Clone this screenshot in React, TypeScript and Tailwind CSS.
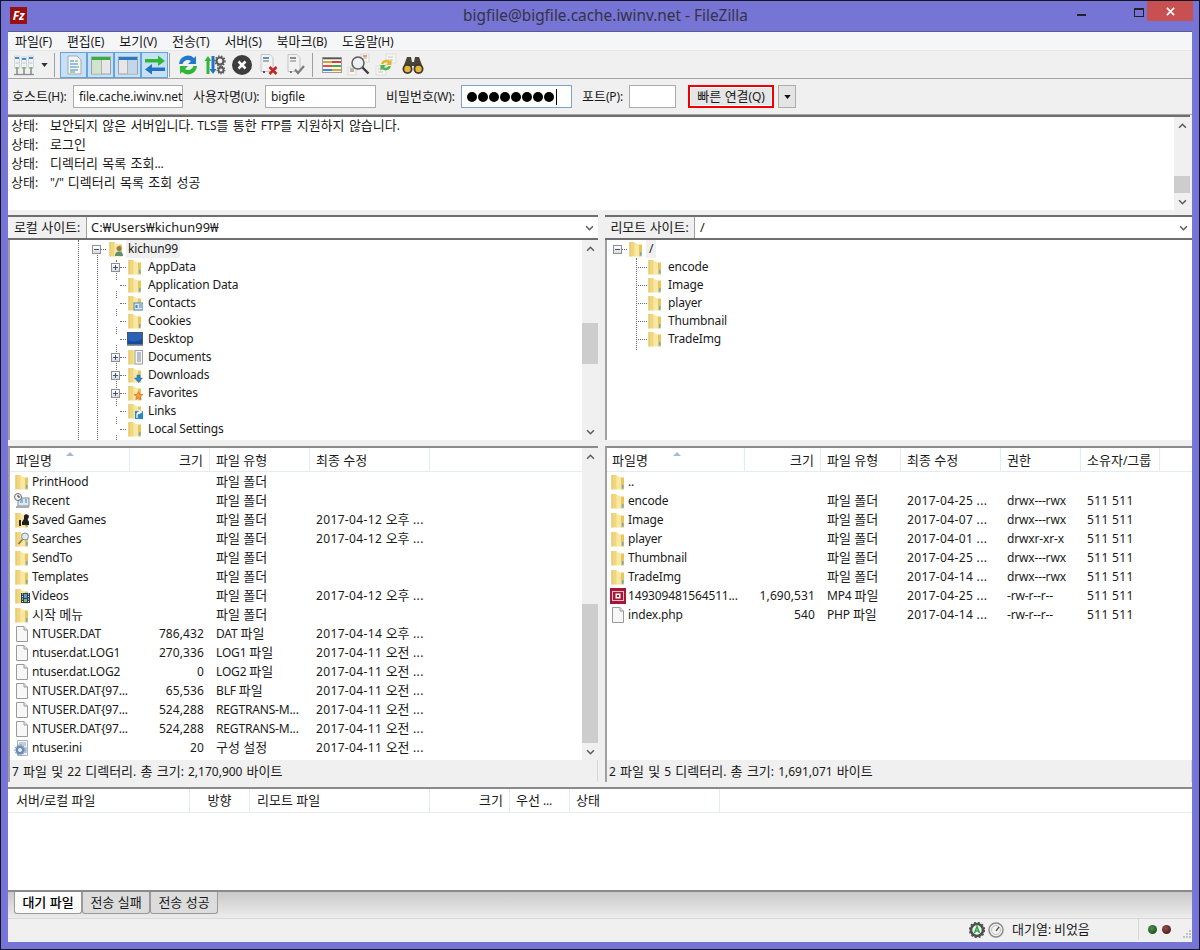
import type { ReactNode } from "react";

type FileRow = {
  name: string;
  size?: string;
  type: string;
  date?: string;
  perm?: string;
  owner?: string;
  icon: ReactNode;
};

// hangul runs are set a bit larger than latin, like the Windows UI font
const K = ({ children }: { children: string }) => (
  <span>
    {children.split(/([가-힣]+(?:\s[가-힣]+)*)/).map((part, i) =>
      i % 2 ? (
        <span key={i} className="text-[13px] leading-none tracking-normal">
          {part}
        </span>
      ) : (
        part
      ),
    )}
  </span>
);

const FolderIcon = ({ badge }: { badge?: ReactNode }) => (
  <svg viewBox="0 0 16 16" className="h-4 w-4 shrink-0">
    <path d="M1.500 1h5v14.500h-5z" fill="#f0d67f" />
    <path d="M1.500 1h1v14.500h-1z" fill="#e2c066" />
    <path d="M6 1.500l5 2V15.500H6z" fill="#f9e8a4" />
    <path d="M6 1.500h1v14H6z" fill="#f6e095" />
    <path d="M11 3.500h3V15.500h-3z" fill="#e9c55c" />
    <path d="M12 11h1.500v3.500H12z" fill="#58aede" />
    {badge}
  </svg>
);

const DocIcon = () => (
  <svg viewBox="0 0 16 16" className="h-4 w-4 shrink-0">
    <path d="M2.500.5h7.500l3.500 3.500v11.500h-11z" fill="#f7f7f7" stroke="#9a9a9a" />
    <path d="M10 .5v3.500h3.500" fill="#e4e4e4" stroke="#9a9a9a" />
  </svg>
);

const IniIcon = () => (
  <svg viewBox="0 0 16 16" className="h-4 w-4 shrink-0">
    <path d="M3.500.5h10v15h-10z" fill="#f4f7fa" stroke="#a9b3bd" />
    <path d="M5 3h7M5 5h7M10 8h3M10 10h3M10 12h3" stroke="#8ea4ba" />
    <circle cx="6" cy="10" r="4.500" fill="#6b8db5" />
    <circle cx="6" cy="10" r="5.200" fill="none" stroke="#6b8db5" strokeDasharray="1.500 1.500" />
    <circle cx="6" cy="10" r="2" fill="#e9eef4" />
  </svg>
);

const Mp4Icon = () => (
  <svg viewBox="0 0 16 16" className="h-4 w-4 shrink-0">
    <rect width="16" height="16" fill="#a61639" />
    <rect x="2.500" y="3.500" width="11" height="9" fill="none" stroke="#e9b9c5" />
    <rect x="5.500" y="5.500" width="5" height="5" fill="#ffffff" />
    <rect x="7" y="7" width="2" height="2" fill="#a61639" />
  </svg>
);

const RecentIcon = () => (
  <svg viewBox="0 0 16 16" className="h-4 w-4 shrink-0">
    <rect x="4" y="5" width="11" height="8" fill="#dfe7ef" stroke="#7f8a96" />
    <path d="M6 7h3M6 9h3M11 7h2M11 9h2" stroke="#3c7fc0" />
    <path d="M2 13h13v2H2z" fill="#a7aeb5" />
    <circle cx="4" cy="4" r="3.500" fill="#f2f2f2" stroke="#6a6a6a" />
    <path d="M4 2v2h2" stroke="#333333" fill="none" />
  </svg>
);

const LocalBadge = {
  user: (
    <g>
      <circle cx="11" cy="7.500" r="2.500" fill="#9a7a58" />
      <path d="M7 15c0-3.500 2-4.500 4-4.500s4 1 4 4.500z" fill="#5e8f6e" />
    </g>
  ),
  contacts: (
    <g>
      <rect x="7" y="8" width="9" height="7" fill="#d8e8f4" stroke="#4e87b5" />
      <path d="M12 10h3M12 12h3" stroke="#4e87b5" />
      <rect x="8.500" y="10" width="2" height="3" fill="#4e87b5" />
    </g>
  ),
  documents: (
    <g>
      <rect x="8" y="1.500" width="7.500" height="13.500" fill="#f2f4f6" stroke="#9aa2aa" />
      <path d="M10 4h4M10 6h4M10 8h4M10 10h4M10 12h4" stroke="#7c8894" />
    </g>
  ),
  downloads: <path d="M10 8h3v3h2.500l-4 4.500-4-4.500H10z" fill="#2f86d2" stroke="#1c62a8" strokeWidth=".5" />,
  favorites: (
    <path d="M11.500 6.500l1.300 2.800 3 .3-2.300 2 .7 3-2.700-1.600-2.700 1.600.7-3-2.300-2 3-.3z" fill="#f3a22c" stroke="#d2532a" strokeWidth=".6" />
  ),
  links: (
    <g>
      <rect x="8" y="8" width="8" height="8" fill="#2a86cf" />
      <path d="M10 15v-3c0-2 1-3 3-3M11.500 7l3 2-3 2" fill="none" stroke="#ffffff" strokeWidth="1.300" />
    </g>
  ),
  games: (
    <g>
      <path d="M10 4a2.500 2.500 0 1 1 3.500 3l1.500 3v3H8v-3l2-3z" fill="#1f1f1f" />
      <path d="M5 8h2v6H5z" fill="#2d2d2d" />
    </g>
  ),
  search: (
    <g>
      <circle cx="11" cy="5.500" r="3.500" fill="#dbe9f4" stroke="#7f8d99" />
      <path d="M8.500 8.500L4.500 13" stroke="#8b6a3f" strokeWidth="1.500" />
    </g>
  ),
  video: (
    <g>
      <rect x="7" y="5" width="9" height="10" fill="#26425c" />
      <path d="M8 6h1M8 8.500h1M8 11h1M8 13.500h1M14 6h1M14 8.500h1M14 11h1M14 13.500h1" stroke="#ffffff" />
      <rect x="10" y="6" width="3" height="4" fill="#5d9bd1" />
      <rect x="10" y="11" width="3" height="3" fill="#87b465" />
    </g>
  ),
};

const DesktopIcon = () => (
  <svg viewBox="0 0 16 16" className="h-4 w-4 shrink-0">
    <rect x=".5" y="1.500" width="15" height="12" fill="#2a62bb" stroke="#4a5562" />
    <path d="M1 9c4 2 9 2 14-1v5H1z" fill="#174a9a" />
    <rect y="13.500" width="16" height="1.500" fill="#8e99a6" />
  </svg>
);

const localRows: FileRow[] = [
  { name: "PrintHood", type: "파일 폴더", icon: <FolderIcon /> },
  { name: "Recent", type: "파일 폴더", icon: <RecentIcon /> },
  { name: "Saved Games", type: "파일 폴더", date: "2017-04-12 오후 ...", icon: <FolderIcon badge={LocalBadge.games} /> },
  { name: "Searches", type: "파일 폴더", date: "2017-04-12 오후 ...", icon: <FolderIcon badge={LocalBadge.search} /> },
  { name: "SendTo", type: "파일 폴더", icon: <FolderIcon /> },
  { name: "Templates", type: "파일 폴더", icon: <FolderIcon /> },
  { name: "Videos", type: "파일 폴더", date: "2017-04-12 오후 ...", icon: <FolderIcon badge={LocalBadge.video} /> },
  { name: "시작 메뉴", type: "파일 폴더", icon: <FolderIcon /> },
  { name: "NTUSER.DAT", size: "786,432", type: "DAT 파일", date: "2017-04-14 오후 ...", icon: <DocIcon /> },
  { name: "ntuser.dat.LOG1", size: "270,336", type: "LOG1 파일", date: "2017-04-11 오전 ...", icon: <DocIcon /> },
  { name: "ntuser.dat.LOG2", size: "0", type: "LOG2 파일", date: "2017-04-11 오전 ...", icon: <DocIcon /> },
  { name: "NTUSER.DAT{97...", size: "65,536", type: "BLF 파일", date: "2017-04-11 오전 ...", icon: <DocIcon /> },
  { name: "NTUSER.DAT{97...", size: "524,288", type: "REGTRANS-M...", date: "2017-04-11 오전 ...", icon: <DocIcon /> },
  { name: "NTUSER.DAT{97...", size: "524,288", type: "REGTRANS-M...", date: "2017-04-11 오전 ...", icon: <DocIcon /> },
  { name: "ntuser.ini", size: "20", type: "구성 설정", date: "2017-04-11 오전 ...", icon: <IniIcon /> },
];

const remoteRows: FileRow[] = [
  { name: "..", type: "", icon: <FolderIcon /> },
  { name: "encode", type: "파일 폴더", date: "2017-04-25 ...", perm: "drwx---rwx", owner: "511 511", icon: <FolderIcon /> },
  { name: "Image", type: "파일 폴더", date: "2017-04-07 ...", perm: "drwx---rwx", owner: "511 511", icon: <FolderIcon /> },
  { name: "player", type: "파일 폴더", date: "2017-04-01 ...", perm: "drwxr-xr-x", owner: "511 511", icon: <FolderIcon /> },
  { name: "Thumbnail", type: "파일 폴더", date: "2017-04-25 ...", perm: "drwx---rwx", owner: "511 511", icon: <FolderIcon /> },
  { name: "TradeImg", type: "파일 폴더", date: "2017-04-14 ...", perm: "drwx---rwx", owner: "511 511", icon: <FolderIcon /> },
  { name: "149309481564511...", size: "1,690,531", type: "MP4 파일", date: "2017-04-25 ...", perm: "-rw-r--r--", owner: "511 511", icon: <Mp4Icon /> },
  { name: "index.php", size: "540", type: "PHP 파일", date: "2017-04-14 ...", perm: "-rw-r--r--", owner: "511 511", icon: <DocIcon /> },
];

const menus = ["파일(F)", "편집(E)", "보기(V)", "전송(T)", "서버(S)", "북마크(B)", "도움말(H)"];

const ChevronUp = () => (
  <svg viewBox="0 0 10 7" className="h-[6px] w-[9px]">
    <path d="M1 5.500l4-4 4 4" fill="none" stroke="#5c5c5c" strokeWidth="1.800" />
  </svg>
);

const ChevronDown = () => (
  <svg viewBox="0 0 10 7" className="h-[6px] w-[9px]">
    <path d="M1 1.500l4 4 4-4" fill="none" stroke="#5c5c5c" strokeWidth="1.800" />
  </svg>
);

const Scrollbar = ({ before, thumb }: { before: string; thumb: string }) => (
  <div className="flex w-[16px] shrink-0 flex-col bg-[#f0f0f0]">
    <div className="flex h-[17px] shrink-0 items-center justify-center">
      <ChevronUp />
    </div>
    <div className={before} />
    <div className={thumb} />
    <div className="flex-1" />
    <div className="flex h-[17px] shrink-0 items-center justify-center">
      <ChevronDown />
    </div>
  </div>
);

const Sep = () => (
  <div className="flex w-[9px] shrink-0 justify-start pl-[3px]">
    <div className="h-[24px] w-px bg-[#a0a0a0]" />
  </div>
);

const Cell = ({ children, active }: { children: ReactNode; active?: boolean }) => (
  <div
    className={
      active
        ? "flex h-[26px] w-[27px] shrink-0 items-center justify-center border border-[#62a3e0] bg-[#c8e0f5]"
        : "flex h-[26px] w-[27px] shrink-0 items-center justify-center"
    }
  >
    {children}
  </div>
);

const ToolIcon = ({ children }: { children: ReactNode }) => (
  <svg viewBox="0 0 24 24" className="h-6 w-6">
    {children}
  </svg>
);

const Toolbar = () => (
  <div className="flex h-[28px] items-center border-t border-[#e8e8e8] bg-[#f0f0f0] pl-[2px]">
    <Cell>
      <ToolIcon>
        <path d="M2.500 3h5v12h-5zM9.500 4h5v11h-5zM16.500 3h5v12h-5z" fill="#f0f2f4" stroke="#c6ccd2" strokeWidth=".7" />
        <path d="M3 5h4M10 6h4M17 5h4" stroke="#3d8fd6" strokeWidth="2" />
        <path d="M3.500 10h3M10.500 10h3M17.500 10h3" stroke="#b8c0c8" />
        <path d="M3.500 15h3M10.500 15h3M17.500 15h3" stroke="#4fb04f" strokeWidth="1.600" />
        <path d="M5 16v5M12 16v5M19 16v5" stroke="#777777" strokeWidth="1.300" />
        <path d="M2 21.500h20" stroke="#8a8a8a" strokeWidth="1.300" />
      </ToolIcon>
    </Cell>
    <div className="flex w-[14px] shrink-0 justify-center">
      <svg viewBox="0 0 8 5" className="h-[4px] w-[7px]">
        <path d="M0 0h8L4 5z" fill="#333333" />
      </svg>
    </div>
    <Sep />
    <Cell active>
      <ToolIcon>
        <path d="M6 3h9l4 4v14H6z" fill="#f3f4f5" stroke="#a9a9a9" />
        <path d="M8 8h4M8 11h8M8 14h6M8 17h8" stroke="#3f87c6" strokeWidth="1.200" />
        <path d="M13 8h3M14 14h3M8 19h5" stroke="#57ad5f" strokeWidth="1.200" />
      </ToolIcon>
    </Cell>
    <Cell active>
      <ToolIcon>
        <rect x="2.500" y="4" width="19" height="17" fill="#e7e7e7" stroke="#9aa0a6" />
        <rect x="3" y="4" width="18" height="3" fill="#3aae3a" />
        <rect x="3" y="7" width="9" height="13.500" fill="#cfe3cf" />
        <path d="M12.500 7v14" stroke="#b0b0b0" />
      </ToolIcon>
    </Cell>
    <Cell active>
      <ToolIcon>
        <rect x="2.500" y="4" width="19" height="17" fill="#e7e7e7" stroke="#9aa0a6" />
        <rect x="3" y="4" width="18" height="3" fill="#2b77c9" />
        <rect x="12" y="7" width="9" height="13.500" fill="#c4d7ea" />
        <path d="M11.500 7v14" stroke="#b0b0b0" />
      </ToolIcon>
    </Cell>
    <Cell active>
      <ToolIcon>
        <path d="M2 6h13V2.500L22 8l-7 5V9.500H2z" fill="#2fb838" />
        <path d="M22 14.500H9V11l-7 5.500 7 5V18h13z" fill="#2372c4" />
      </ToolIcon>
    </Cell>
    <div className="w-[6px] shrink-0">
      <div className="ml-[1px] h-[24px] w-px bg-[#a0a0a0]" />
    </div>
    <Cell>
      <ToolIcon>
        <path d="M3 11a9 9 0 0 1 15-6l2-2v8h-8l3-3a5.500 5.500 0 0 0-8.500 3z" fill="#2279c9" />
        <path d="M21 13a9 9 0 0 1-15 6l-2 2v-8h8l-3 3a5.500 5.500 0 0 0 8.500-3z" fill="#2fb838" />
      </ToolIcon>
    </Cell>
    <Cell>
      <ToolIcon>
        <path d="M4 3l3.500 5H5.500v13h-3V8H.5z" fill="#2fb838" transform="translate(1 0)" />
        <path d="M6 21l-3.500-5h2V3h3v13h2z" fill="#2372c4" transform="translate(4 0)" />
        <circle cx="17" cy="8" r="3.500" fill="none" stroke="#595959" strokeWidth="2.200" />
        <circle cx="17" cy="8" r="5" fill="none" stroke="#595959" strokeWidth="1.400" strokeDasharray="1.500 1.500" />
        <circle cx="18" cy="17" r="2.500" fill="none" stroke="#595959" strokeWidth="1.800" />
        <circle cx="18" cy="17" r="3.800" fill="none" stroke="#595959" strokeWidth="1.200" strokeDasharray="1.300 1.300" />
      </ToolIcon>
    </Cell>
    <Cell>
      <ToolIcon>
        <circle cx="12" cy="12" r="10" fill="#3d3d3d" />
        <path d="M8.500 8.500l7 7M15.500 8.500l-7 7" stroke="#ffffff" strokeWidth="2.600" />
      </ToolIcon>
    </Cell>
    <Cell>
      <ToolIcon>
        <path d="M4 1.500h9l3 3v14H4z" fill="#f2f2f2" stroke="#c4c4c4" />
        <path d="M6 5h6" stroke="#2c7cc9" strokeWidth="1.600" />
        <path d="M6 8h6" stroke="#8e8e8e" strokeWidth="1.400" />
        <rect x="6" y="18" width="2" height="2" fill="#555555" />
        <path d="M12.500 14l7 7M19.500 14l-7 7" stroke="#c5242a" strokeWidth="2.600" />
      </ToolIcon>
    </Cell>
    <Cell>
      <ToolIcon>
        <path d="M4 1.500h9l3 3v14H4z" fill="#f2f2f2" stroke="#c4c4c4" />
        <path d="M6 5h6" stroke="#727272" strokeWidth="1.600" />
        <path d="M6 8h6" stroke="#9e9e9e" strokeWidth="1.400" />
        <rect x="6" y="18" width="2" height="2" fill="#777777" />
        <path d="M11 16.500l3 3.500 6-7" fill="none" stroke="#7d7d7d" strokeWidth="2.200" />
      </ToolIcon>
    </Cell>
    <Sep />
    <Cell>
      <ToolIcon>
        <rect x="2.500" y="4.500" width="19" height="15" fill="#f6f6f6" stroke="#9c9c9c" />
        <path d="M3 5.500h18" stroke="#555555" strokeWidth="1.500" />
        <path d="M3 9h9" stroke="#d2a43a" strokeWidth="2" />
        <path d="M12 9h9" stroke="#d8403a" strokeWidth="2" />
        <path d="M3 13h9" stroke="#e2513f" strokeWidth="2" />
        <path d="M12 13h9" stroke="#3fae44" strokeWidth="2" />
        <path d="M3 17h9" stroke="#3d8ad0" strokeWidth="2" />
        <path d="M12 17h9" stroke="#d2a43a" strokeWidth="2" />
      </ToolIcon>
    </Cell>
    <Cell>
      <ToolIcon>
        <rect x="14" y="1" width="8" height="8" fill="#f6f6f6" stroke="#d8d8d8" />
        <path d="M16 3h4" stroke="#d8403a" />
        <path d="M16 5h4" stroke="#e0a935" />
        <rect x="1" y="14" width="8" height="8" fill="#f6f6f6" stroke="#d8d8d8" />
        <path d="M3 16h4" stroke="#3fae44" />
        <path d="M3 18h4" stroke="#d8403a" />
        <circle cx="11" cy="10" r="6" fill="#edf1f4" stroke="#5c5c5c" strokeWidth="1.500" />
        <path d="M15.500 14.500l6 6" stroke="#3d3d3d" strokeWidth="2.400" />
      </ToolIcon>
    </Cell>
    <Cell>
      <ToolIcon>
        <rect x="12" y="1" width="10" height="9" fill="#f6f6f6" stroke="#dddddd" />
        <rect x="2" y="13" width="10" height="9" fill="#f6f6f6" stroke="#dddddd" />
        <path d="M4 16h5M4 19h5M14 4h5M14 7h5" stroke="#c4c4c4" />
        <path d="M7 11a5.500 5.500 0 0 1 9-3l1.500-1.500v5.500h-5.500l2-2a3 3 0 0 0-4.500 1z" fill="#e6b32a" />
        <path d="M17 13a5.500 5.500 0 0 1-9 3l-1.500 1.500V12h5.500l-2 2a3 3 0 0 0 4.500-1z" fill="#4bb648" />
      </ToolIcon>
    </Cell>
    <Cell>
      <ToolIcon>
        <path d="M6 4h4l1 5h2l1-5h4l4 11H14l-1-2h-2l-1 2H2z" fill="#4a4438" />
        <circle cx="6.500" cy="16" r="5" fill="#3e3a32" />
        <circle cx="17.500" cy="16" r="5" fill="#3e3a32" />
        <circle cx="6.500" cy="16" r="3.200" fill="#e6b735" />
        <circle cx="17.500" cy="16" r="3.200" fill="#e6b735" />
      </ToolIcon>
    </Cell>
  </div>
);

const Field = ({ className, children }: { className: string; children?: ReactNode }) => (
  <div className={`flex h-[23px] shrink-0 items-center border bg-white px-[5px] leading-none ${className}`}>{children}</div>
);

const QuickBar = () => (
  <div className="flex h-[37px] items-center border-y border-t-[#a6a6a6] border-b-[#a6a6a6] bg-[#f0f0f0]">
    <span className="w-[65px] shrink-0 pl-[4px]">
      <K>호스트(H):</K>
    </span>
    <Field className="w-[110px] border-[#ababab]">file.cache.iwinv.net</Field>
    <span className="w-[82px] shrink-0 pl-[10px]">
      <K>사용자명(U):</K>
    </span>
    <Field className="w-[111px] border-[#ababab]">bigfile</Field>
    <span className="w-[85px] shrink-0 pl-[10px]">
      <K>비밀번호(W):</K>
    </span>
    <Field className="w-[111px] border-[#7da2ce]">
      <span className="flex items-center gap-[1px]">
        {[0, 1, 2, 3, 4, 5, 6, 7].map((i) => (
          <span key={i} className="h-[10px] w-[10px] rounded-full bg-black" />
        ))}
        <span className="ml-[1px] h-[16px] w-px bg-black" />
      </span>
    </Field>
    <span className="w-[57px] shrink-0 pl-[10px]">
      <K>포트(P):</K>
    </span>
    <Field className="w-[47px] border-[#ababab]" />
    <div className="ml-[12px] flex h-[23px] w-[86px] shrink-0 items-center justify-center border-2 border-[#f00000] bg-[#e6e6e6] shadow-[inset_0_0_0_1px_#ffffff]">
      <K>빠른 연결(Q)</K>
    </div>
    <div className="ml-[4px] flex h-[23px] w-[18px] shrink-0 items-center justify-center border border-[#acacac] bg-[#e4e4e4]">
      <svg viewBox="0 0 8 5" className="h-[4px] w-[7px]">
        <path d="M0 0h8L4 5z" fill="#111111" />
      </svg>
    </div>
  </div>
);

const logLines = [
  "보안되지 않은 서버입니다. TLS를 통한 FTP를 지원하지 않습니다.",
  "로그인",
  "디렉터리 목록 조회...",
  '"/" 디렉터리 목록 조회 성공',
];

const LogPanel = () => (
  <div className="mr-[2px] flex h-[95px] border-t-2 border-t-[#6e6e6e] bg-white">
    <div className="-mt-[1px] flex-1 pl-[3px] [word-spacing:1px]">
      {logLines.map((line) => (
        <div key={line} className="flex h-[19px] items-center">
          <span className="w-[39px] shrink-0">
            <K>상태:</K>
          </span>
          <K>{line}</K>
        </div>
      ))}
    </div>
    <Scrollbar before="h-[42px] shrink-0" thumb="h-[17px] shrink-0 bg-[#cdcdcd]" />
  </div>
);

const SiteBar = ({ label, path, labelWidth, pathPad }: { label: string; path: string; labelWidth: string; pathPad: string }) => (
  <div className="flex h-[25px] border-y-2 border-y-[#6e6e6e] bg-white">
    <div className={`flex shrink-0 items-center justify-center border-r border-[#a0a0a0] bg-[#f0f0f0] ${labelWidth}`}>
      <K>{label}</K>
    </div>
    <div className={`flex flex-1 items-center text-[12.8px] tracking-[0.1px] ${pathPad}`}>{path}</div>
    <div className="flex w-[18px] items-center justify-center">
      <ChevronDown />
    </div>
  </div>
);

const Expander = ({ open }: { open: boolean }) => (
  <span className="relative flex h-[9px] w-[9px] shrink-0 items-center justify-center border border-[#8e8f8f] bg-gradient-to-b from-white to-[#dcdcdc]">
    <span className="h-px w-[5px] bg-[#33558c]" />
    {!open && <span className="absolute h-[5px] w-px bg-[#33558c]" />}
  </span>
);

const Dots = ({ className }: { className: string }) => (
  <span className={`shrink-0 border-t border-dotted border-[#6a6a6a] ${className}`} />
);

const localTree: { name: string; icon: ReactNode; more?: boolean }[] = [
  { name: "AppData", icon: <FolderIcon />, more: true },
  { name: "Application Data", icon: <FolderIcon /> },
  { name: "Contacts", icon: <FolderIcon badge={LocalBadge.contacts} /> },
  { name: "Cookies", icon: <FolderIcon /> },
  { name: "Desktop", icon: <DesktopIcon /> },
  { name: "Documents", icon: <FolderIcon badge={LocalBadge.documents} />, more: true },
  { name: "Downloads", icon: <FolderIcon badge={LocalBadge.downloads} />, more: true },
  { name: "Favorites", icon: <FolderIcon badge={LocalBadge.favorites} />, more: true },
  { name: "Links", icon: <FolderIcon badge={LocalBadge.links} /> },
  { name: "Local Settings", icon: <FolderIcon /> },
];

const LocalTree = () => (
  <div className="flex h-[200px] overflow-hidden border-l-2 border-l-[#a0a0a0] bg-white">
    <div className="relative flex-1 overflow-hidden">
      <span className="absolute top-0 bottom-0 left-[68px] border-l border-dotted border-[#6a6a6a]" />
      <span className="absolute top-[15px] bottom-0 left-[87px] border-l border-dotted border-[#6a6a6a]" />
      <span className="absolute top-[20px] bottom-0 left-[106px] border-l border-dotted border-[#6a6a6a]" />
      <div className="flex h-[18px] items-center pl-[82px]">
        <span className="relative bg-white">
          <Expander open />
        </span>
        <Dots className="w-[5px]" />
        <span className="relative ml-[2px]">
          <FolderIcon badge={LocalBadge.user} />
        </span>
        <span className="ml-[2px] bg-[#f0f0f0] px-[2px] leading-[18px]">kichun99</span>
      </div>
      {localTree.map((row) => (
        <div key={row.name} className="relative flex h-[18px] items-center pl-[101px]">
          <span className="relative flex w-[9px] shrink-0 justify-center bg-white">{row.more ? <Expander open={false} /> : <span className="h-[9px] w-[4px]" />}</span>
          <Dots className="w-[6px]" />
          <span className="ml-[1px]">{row.icon}</span>
          <span className="ml-[5px]">{row.name}</span>
        </div>
      ))}
      <div className="flex h-[18px] items-center pl-[117px]">
        <FolderIcon />
      </div>
    </div>
    <Scrollbar before="h-[66px] shrink-0" thumb="h-[41px] shrink-0 bg-[#cdcdcd]" />
  </div>
);

const RemoteTree = () => (
  <div className="relative h-[200px] overflow-hidden border-l-2 border-l-[#a0a0a0] bg-white">
    <span className="absolute top-[18px] left-[29px] h-[92px] border-l border-dotted border-[#6a6a6a]" />
    <div className="flex h-[18px] items-center pl-[6px]">
      <Expander open />
      <Dots className="w-[5px]" />
      <span className="ml-[1px]">
        <FolderIcon />
      </span>
      <span className="ml-[2px] bg-[#f0f0f0] px-[3px] leading-[18px]">/</span>
    </div>
    {["encode", "Image", "player", "Thumbnail", "TradeImg"].map((name) => (
      <div key={name} className="flex h-[18px] items-center pl-[29px]">
        <Dots className="w-[11px]" />
        <FolderIcon />
        <span className="ml-[5px]">{name}</span>
      </div>
    ))}
  </div>
);

const headCell = "relative flex h-[24px] items-center border-r border-[#e3ebf3] pl-[6px]";

const SortArrow = ({ className }: { className: string }) => (
  <svg viewBox="0 0 8 4" className={`absolute top-[4px] h-[4px] w-[8px] ${className}`}>
    <path d="M0 4l4-4 4 4z" fill="#a7bcd2" />
  </svg>
);

const Name = ({ row, pad }: { row: FileRow; pad: string }) => (
  <div className={`flex min-w-0 items-center ${pad}`}>
    {row.icon}
    <span className="ml-[2px] whitespace-nowrap">
      <K>{row.name}</K>
    </span>
  </div>
);

const Label = ({ text }: { text?: string }) => (
  <div className="pl-[6px] whitespace-nowrap">
    <K>{text ?? ""}</K>
  </div>
);

// digits in the date and owner columns run wider than names do
const Digits = ({ text }: { text?: string }) => (
  <div className="pl-[6px] tracking-[0.35px] whitespace-nowrap">
    <K>{text ?? ""}</K>
  </div>
);

const LocalList = () => (
  <div className="flex h-[314px] border-t-2 border-l-2 border-t-[#8a8a8a] border-l-[#a0a0a0] bg-white">
    <div className="min-w-0 flex-1">
      <div className="grid h-[24px] grid-cols-[120px_80px_100px_120px] border-b border-[#e3ebf3]">
        <div className={headCell}>
          <K>파일명</K>
          <SortArrow className="left-[56px]" />
        </div>
        <div className={`${headCell} justify-end pr-[6px]`}>
          <K>크기</K>
        </div>
        <div className={headCell}>
          <K>파일 유형</K>
        </div>
        <div className={headCell}>
          <K>최종 수정</K>
        </div>
      </div>
      {localRows.map((row, i) => (
        <div key={i} className="grid h-[19px] grid-cols-[120px_80px_100px_120px] items-center">
          <Name row={row} pad="pl-[4px]" />
          <div className="pr-[6px] text-right tracking-[0.1px]">{row.size}</div>
          <Label text={row.type} />
          <Digits text={row.date} />
        </div>
      ))}
    </div>
    <Scrollbar before="h-[139px] shrink-0" thumb="h-[139px] shrink-0 bg-[#cdcdcd]" />
  </div>
);

const RemoteList = () => (
  <div className="h-[314px] border-t-2 border-l-2 border-t-[#8a8a8a] border-l-[#a0a0a0] bg-white">
    <div className="grid h-[24px] grid-cols-[138px_76px_80px_100px_80px_79px] border-b border-[#e3ebf3]">
      <div className={`${headCell} !pl-[5px]`}>
        <K>파일명</K>
        <SortArrow className="left-[66px]" />
      </div>
      <div className={`${headCell} justify-end pr-[6px]`}>
        <K>크기</K>
      </div>
      <div className={headCell}>
        <K>파일 유형</K>
      </div>
      <div className={headCell}>
        <K>최종 수정</K>
      </div>
      <div className={headCell}>
        <K>권한</K>
      </div>
      <div className={headCell}>
        <K>소유자/그룹</K>
      </div>
    </div>
    {remoteRows.map((row, i) => (
      <div key={i} className="grid h-[19px] grid-cols-[138px_76px_80px_100px_80px_79px] items-center">
        <Name row={row} pad="pl-[3px]" />
        <div className="pr-[6px] text-right tracking-[0.1px]">{row.size}</div>
        <Label text={row.type} />
        <Digits text={row.date} />
        <Label text={row.perm} />
        <Digits text={row.owner} />
      </div>
    ))}
  </div>
);

const ListStatus = ({ text }: { text: string }) => (
  <div className="flex h-[22px] items-center border-r border-l-2 border-r-[#d8d8d8] border-l-[#a0a0a0] bg-[#f0f0f0] pt-[1px] pl-[2px] tracking-normal [word-spacing:1px]">
    <K>{text}</K>
  </div>
);

const queueCols = [
  { label: "서버/로컬 파일", cls: "w-[182px] pl-[8px]" },
  { label: "방향", cls: "w-[60px] justify-center" },
  { label: "리모트 파일", cls: "w-[180px] pl-[7px]" },
  { label: "크기", cls: "w-[80px] justify-end pr-[6px]" },
  { label: "우선 ...", cls: "w-[60px] pl-[6px]" },
  { label: "상태", cls: "w-[150px] pl-[6px]" },
];

const Tab = ({ label, active }: { label: string; active?: boolean }) => (
  <div
    className={
      active
        ? "flex h-[22px] w-[68px] items-center justify-center rounded-b-[3px] border border-t-0 border-[#9a9a9a] bg-[#fbfbfb] font-medium text-black"
        : "flex h-[22px] w-[68px] items-center justify-center rounded-b-[3px] border border-t-0 border-[#9a9a9a] bg-[#dcdcdc]"
    }
  >
    <K>{label}</K>
  </div>
);

export default function App() {
  return (
    <div className="h-[950px] w-[1200px] overflow-hidden border border-[#15152a] bg-[#7674d4] font-['Noto_Sans','Noto_Sans_CJK_KR',sans-serif] text-[12px] leading-none tracking-[-0.16px] text-[#1a1a1a]">
      <div className="flex h-[30px] pr-[6px] pl-[9px]">
        <div className="mt-[6px] flex h-[17px] w-[17px] items-center justify-center bg-[#9c0f0f] text-[12px] font-bold italic text-white">
          Fz
        </div>
        <div className="flex-1 pt-[6px] pl-[107px] text-center text-[15.4px] leading-[18px] tracking-normal text-[#333344]">
          bigfile@bigfile.cache.iwinv.net - FileZilla
        </div>
        <div className="flex w-[57px] items-center pb-[8px]">
          <span className="mt-[5px] h-[2px] w-[9px] bg-[#222222]" />
        </div>
        <div className="w-[13px] pt-[7px]">
          <span className="block h-[9px] w-[10px] border border-t-2 border-[#222222]" />
        </div>
        <div className="flex h-[20px] w-[46px] items-center justify-center bg-[#c75050]">
          <svg viewBox="0 0 10 10" className="h-[9px] w-[9px]">
            <path d="M1 1l8 8M9 1l-8 8" stroke="#ffffff" strokeWidth="1.800" />
          </svg>
        </div>
      </div>
      <div className="mx-[7px] h-[911px] border-t border-[#5a5a8c] bg-[#f0f0f0]">
        <div className="flex h-[18px] items-center gap-[15px] bg-[#f5f6f7] pl-[7px]">
          {menus.map((m) => (
            <K key={m}>{m}</K>
          ))}
        </div>
        <Toolbar />
        <QuickBar />
        <LogPanel />
        <div className="mt-[5px] flex">
          <div className="w-[590px] shrink-0">
            <SiteBar label="로컬 사이트:" path="C:₩Users₩kichun99₩" labelWidth="w-[79px]" pathPad="pl-[4px]" />
            <LocalTree />
            <div className="h-[6px]" />
            <LocalList />
            <ListStatus text="7 파일 및 22 디렉터리. 총 크기: 2,170,900 바이트" />
          </div>
          <div className="w-[7px] shrink-0" />
          <div className="min-w-0 flex-1">
            <SiteBar label="리모트 사이트:" path="/" labelWidth="w-[90px]" pathPad="pl-[5px]" />
            <RemoteTree />
            <div className="h-[6px]" />
            <RemoteList />
            <ListStatus text="2 파일 및 5 디렉터리. 총 크기: 1,691,071 바이트" />
          </div>
        </div>
        <div className="mt-[5px] h-[105px] border-t-2 border-b-2 border-t-[#8a8a8a] border-b-[#8a8a8a] bg-white">
          <div className="flex h-[24px] border-b border-[#e3ebf3]">
            {queueCols.map((c) => (
              <div key={c.label} className={`flex h-full items-center border-r border-[#e3ebf3] ${c.cls}`}>
                <K>{c.label}</K>
              </div>
            ))}
          </div>
        </div>
        <div className="flex h-[26px] bg-gradient-to-b from-[#c9c9c9] to-[#ececec] pl-[6px]">
          <Tab label="대기 파일" active />
          <Tab label="전송 실패" />
          <Tab label="전송 성공" />
        </div>
        <div className="flex h-[22px] items-center border-t border-[#d9d9d9] bg-[#f0f0f0]">
          <div className="flex-1" />
          <svg viewBox="0 0 16 16" className="h-4 w-4">
            <circle cx="8" cy="8" r="6" fill="#eaf5ea" stroke="#4f4f4f" strokeWidth="2.500" />
            <circle cx="8" cy="8" r="7.500" fill="none" stroke="#4f4f4f" strokeWidth="1.500" strokeDasharray="2 2" />
            <path d="M5.500 11L8 4.500l2.500 6.500M6.500 9h3" fill="none" stroke="#2ea640" strokeWidth="1.500" />
          </svg>
          <svg viewBox="0 0 16 16" className="ml-[3px] h-4 w-4">
            <circle cx="8" cy="8" r="7" fill="#f4f4f4" stroke="#8a8a8a" strokeWidth="1.500" />
            <circle cx="8" cy="8" r="4.500" fill="none" stroke="#bdbdbd" />
            <path d="M8 9l3-4" stroke="#555555" strokeWidth="1.300" />
          </svg>
          <span className="ml-[8px] w-[126px]">
            <K>대기열: 비었음</K>
          </span>
          <div className="h-[21px] border-l border-[#d8d8d8]" />
          <span className="ml-[9px] h-[9px] w-[9px] rounded-full bg-[radial-gradient(circle_at_40%_35%,#4f8f4f,#0c3f0c)]" />
          <span className="ml-[5px] h-[9px] w-[9px] rounded-full bg-[radial-gradient(circle_at_40%_35%,#8f4f4f,#3f0c0c)]" />
          <svg viewBox="0 0 9 9" className="mt-[8px] mr-[1px] ml-[11px] h-[9px] w-[9px]">
            <path d="M7 1h2v2H7zM4 4h2v2H4zM7 4h2v2H7zM1 7h2v2H1zM4 7h2v2H4zM7 7h2v2H7z" fill="#c2c2c2" />
          </svg>
        </div>
      </div>
    </div>
  );
}
